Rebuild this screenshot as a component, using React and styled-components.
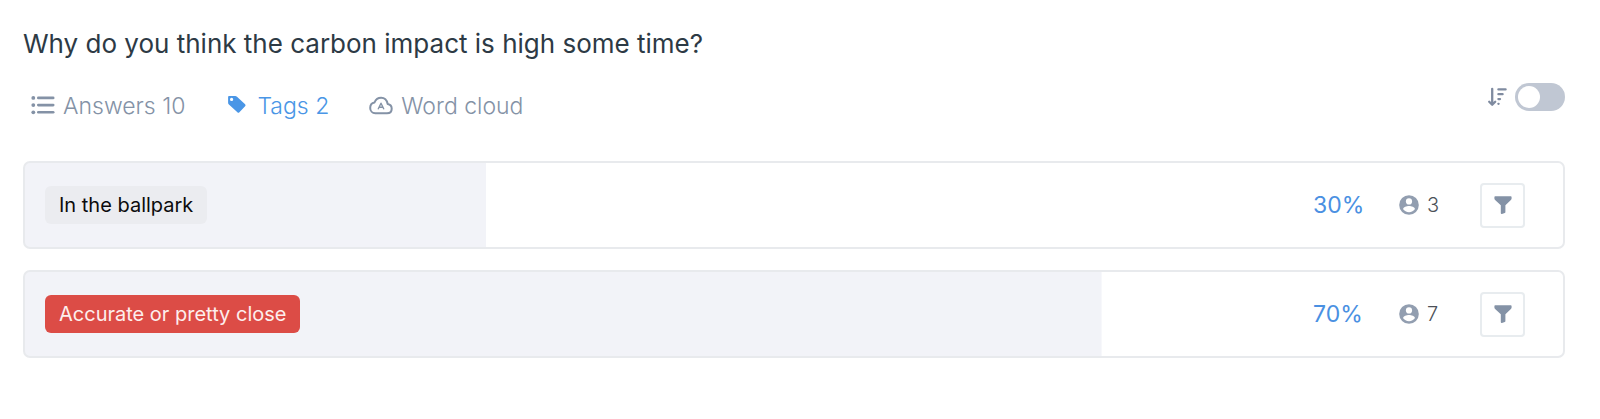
import { useId, useState } from "react";
import styled, { createGlobalStyle } from "styled-components";

const GlobalStyle = createGlobalStyle`
  * {
    box-sizing: border-box;
  }

  body {
    margin: 0;
    background: #fff;
    font-family: Inter, "Liberation Sans", sans-serif;
  }

  button {
    font-family: inherit;
    cursor: pointer;
  }
`;

const Page = styled.main`
  padding: 28px 35px 60px 23px;
`;

const Title = styled.h1`
  margin: 0;
  font-size: 26px;
  font-weight: 400;
  line-height: 32px;
  color: #2d3a45;
`;

const Toolbar = styled.div`
  display: flex;
  align-items: flex-start;
  justify-content: space-between;
  margin-top: 22px;
`;

const Tabs = styled.div`
  display: flex;
  gap: 40px;
  padding: 9px 0 0 8px;
`;

const Tab = styled.button`
  display: flex;
  align-items: center;
  gap: 8px;
  padding: 0;
  border: none;
  background: none;
  font-size: 23px;
  font-weight: 300;
  line-height: 30px;
  color: ${({ $active }) => ($active ? "#4a96e6" : "#8492a6")};

  svg {
    flex: none;
  }
`;

const SortToggle = styled.label`
  display: flex;
  align-items: center;
  gap: 8px;
  height: 30px;
  cursor: pointer;
`;

const Switch = styled.input`
  appearance: none;
  width: 50px;
  height: 28px;
  margin: 0;
  padding: 3px;
  border-radius: 14px;
  background: #c0c7d3;
  cursor: pointer;

  &::before {
    content: "";
    display: block;
    width: 22px;
    height: 22px;
    border-radius: 50%;
    background: #fff;
  }

  &:checked {
    background: #4a96e6;
  }

  &:checked::before {
    margin-left: auto;
  }
`;

const TagList = styled.ul`
  display: flex;
  flex-direction: column;
  gap: 21px;
  margin: 40px 0 0;
  padding: 0;
  list-style: none;
`;

const TagRow = styled.li`
  display: flex;
  align-items: center;
  justify-content: space-between;
  height: 88px;
  padding: 0 38px 0 20px;
  border: 2px solid #e8eaed;
  border-radius: 7px;
  background: linear-gradient(#f2f3f8, #f2f3f8) no-repeat #fff;
`;

const Chip = styled.span`
  padding: 4px 14px;
  border-radius: 6px;
  font-size: 20px;
  line-height: 30px;
  color: ${({ $negative }) => ($negative ? "#fdeeed" : "#0b0b0d")};
  background: ${({ $negative }) => ($negative ? "#dc4c46" : "#ebecf0")};
`;

const Stats = styled.div`
  display: flex;
  align-items: center;
`;

const Percent = styled.span`
  width: 86px;
  font-size: 23px;
  line-height: 30px;
  color: #4a90e2;
`;

const People = styled.span`
  display: flex;
  align-items: center;
  gap: 8px;
  width: 81px;
  font-size: 20px;
  font-weight: 300;
  line-height: 30px;
  color: #4c5157;
`;

const FilterButton = styled.button`
  display: flex;
  align-items: center;
  justify-content: center;
  width: 45px;
  height: 45px;
  padding: 0;
  border: 2px solid #e8ecef;
  border-radius: 4px;
  background: #fff;
`;

function ListIcon() {
  return (
    <svg width="24" height="20" viewBox="0 0 24 20" fill="#8492a6">
      <circle cx="2.3" cy="1.9" r="1.9" />
      <circle cx="2.3" cy="9.1" r="1.9" />
      <circle cx="2.3" cy="16.3" r="1.9" />
      <rect x="6" y="0.6" width="17.5" height="2.6" rx="1.3" />
      <rect x="6" y="7.8" width="17.5" height="2.6" rx="1.3" />
      <rect x="6" y="15" width="17.5" height="2.6" rx="1.3" />
    </svg>
  );
}

function TagIcon() {
  return (
    <svg width="24" height="20" viewBox="-2 1 24 20">
      <path
        d="M2 1H8.2Q9.2 1 10 1.8L18.1 9.3Q19.1 10.3 18.1 11.3L12.4 17.2Q11.4 18.2 10.4 17.2L1.9 9.6Q1.1 8.8 1.1 7.8V2Q1.1 1 2 1ZM4.6 2.8A1.6 1.6 0 1 0 4.6 6A1.6 1.6 0 1 0 4.6 2.8Z"
        fill="#4a96e6"
        fillRule="evenodd"
      />
    </svg>
  );
}

function CloudIcon() {
  return (
    <svg
      width="24"
      height="20"
      viewBox="0 0 24 20"
      fill="none"
      stroke="#8492a6"
      strokeLinecap="round"
      strokeLinejoin="round"
    >
      <path
        d="M6.3 17.2H18C20.8 17.2 22.7 15.4 22.7 12.7C22.7 10.2 21.2 8.4 18.7 8C17.9 4.3 15.5 1.8 12.1 1.8C8.9 1.8 6.7 3.5 5.5 6.5C2.9 6.9 1.2 9.1 1.2 11.9C1.2 14.9 3.3 17.2 6.3 17.2Z"
        strokeWidth="2"
      />
      <path d="M9.3 12.8L12 7.2L14.7 12.8M10.2 11.2H13.8" strokeWidth="1.4" />
    </svg>
  );
}

function SortIcon() {
  return (
    <svg
      width="20"
      height="20"
      viewBox="0 0 20 20"
      fill="none"
      stroke="#7f8ba0"
      strokeWidth="2.3"
      strokeLinecap="round"
      strokeLinejoin="round"
    >
      <path d="M5.2 1.8V17.4M2.2 14.8L5.2 17.8L8.2 14.8" />
      <path d="M11.4 2.4H18.6M11.4 7.2H15.6M11.4 12.1H13M11.4 16.8H11.6" />
    </svg>
  );
}

function PersonIcon() {
  return (
    <svg width="20" height="20" viewBox="0 0 20 20">
      <circle cx="10" cy="10" r="9.8" fill="#929eb0" />
      <circle cx="10" cy="6.4" r="3.1" fill="#fff" />
      <path
        d="M4 14.1C4.3 11.9 7.5 10.9 10 10.9C12.5 10.9 15.7 11.9 16 14.1C14.7 16.1 12.5 17.3 10 17.3C7.5 17.3 5.3 16.1 4 14.1Z"
        fill="#fff"
      />
    </svg>
  );
}

function FilterIcon() {
  return (
    <svg width="18" height="20" viewBox="0 0 18 20" fill="#8492a6">
      <path d="M1.2 1.2H16.8Q17.6 1.2 17.6 2.2V3.4Q17.6 4.3 16.9 5L11.4 10.3V17Q11.4 17.8 10.7 18.1L8 18.9Q6.8 19.1 6.8 18V10.3L1.1 5Q.4 4.3 .4 3.4V2.2Q.4 1.2 1.2 1.2Z" />
    </svg>
  );
}

const tabs = [
  { id: "answers", label: "Answers 10", Icon: ListIcon },
  { id: "tags", label: "Tags 2", Icon: TagIcon },
  { id: "cloud", label: "Word cloud", Icon: CloudIcon },
];

const tags = [
  { label: "In the ballpark", percent: 30, people: 3 },
  { label: "Accurate or pretty close", percent: 70, people: 7, negative: true },
];

function App() {
  const [activeTab, setActiveTab] = useState("tags");
  const [sorted, setSorted] = useState(false);
  const sortId = useId();

  return (
    <Page>
      <GlobalStyle />
      <Title>Why do you think the carbon impact is high some time?</Title>
      <Toolbar>
        <Tabs>
          {tabs.map(({ id, label, Icon }) => (
            <Tab
              key={id}
              type="button"
              $active={activeTab === id}
              onClick={() => setActiveTab(id)}
            >
              <Icon />
              {label}
            </Tab>
          ))}
        </Tabs>
        <SortToggle htmlFor={sortId}>
          <SortIcon />
          <Switch
            id={sortId}
            type="checkbox"
            aria-label="Sort"
            checked={sorted}
            onChange={(e) => setSorted(e.target.checked)}
          />
        </SortToggle>
      </Toolbar>
      <TagList>
        {tags.map((tag) => (
          <TagRow
            key={tag.label}
            style={{ backgroundSize: `${tag.percent}% 100%` }}
          >
            <Chip $negative={tag.negative}>{tag.label}</Chip>
            <Stats>
              <Percent>{tag.percent}%</Percent>
              <People>
                <PersonIcon />
                {tag.people}
              </People>
              <FilterButton type="button" aria-label={`Filter ${tag.label}`}>
                <FilterIcon />
              </FilterButton>
            </Stats>
          </TagRow>
        ))}
      </TagList>
    </Page>
  );
}

export default App;
